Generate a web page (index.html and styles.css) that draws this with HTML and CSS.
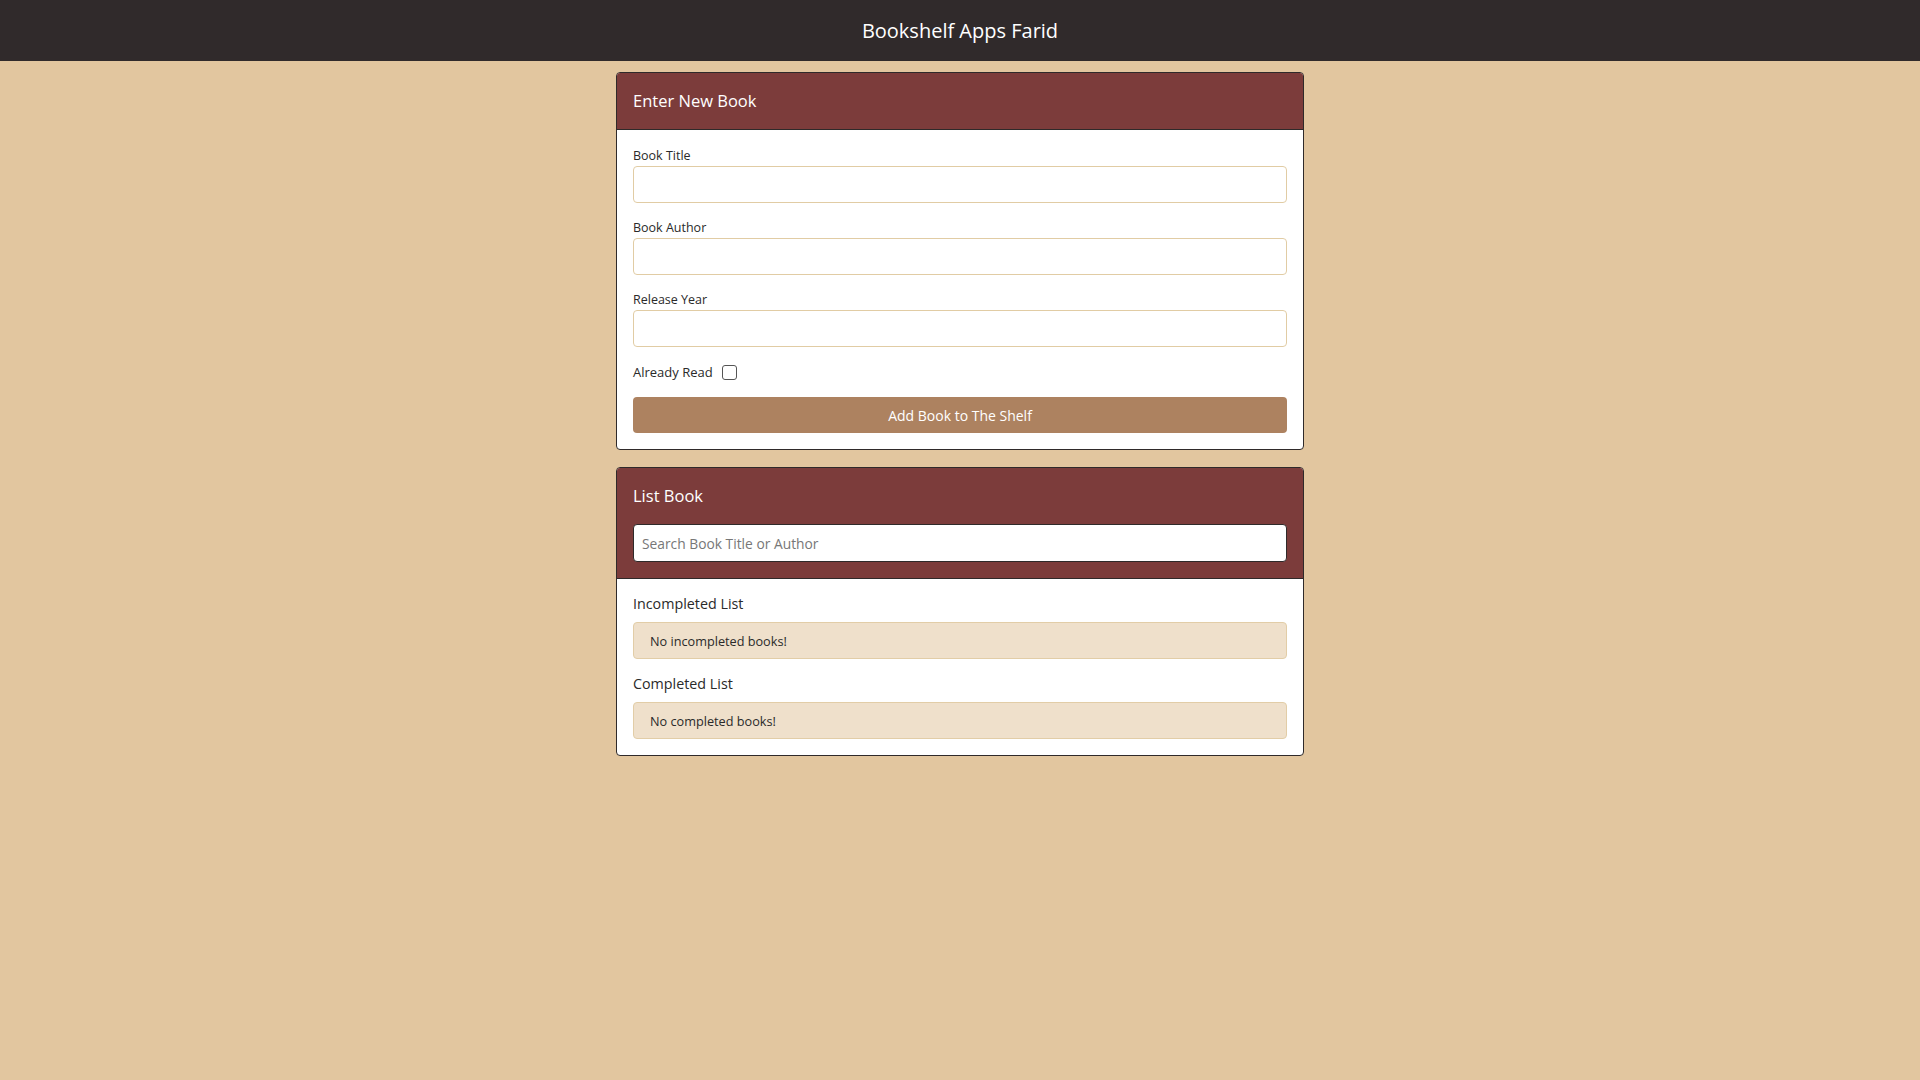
FILE: index.html
```html
<!DOCTYPE html>
<html lang="en">
<head>
<meta charset="utf-8">
<title>Bookshelf Apps Farid</title>
<link rel="stylesheet" href="styles.css">
</head>
<body>
<header class="topbar">
  <h1 class="topbar-title">Bookshelf Apps Farid</h1>
</header>
<main class="container">
  <section class="card">
    <div class="card-head">
      <h2 class="card-title">Enter New Book</h2>
    </div>
    <form class="card-body form-body">
      <div class="field">
        <label class="label" for="title">Book Title</label>
        <input class="input" id="title" type="text">
      </div>
      <div class="field">
        <label class="label" for="author">Book Author</label>
        <input class="input" id="author" type="text">
      </div>
      <div class="field">
        <label class="label" for="year">Release Year</label>
        <input class="input" id="year" type="number">
      </div>
      <div class="check-row">
        <label class="label label-check" for="read">Already Read</label>
        <input class="checkbox" id="read" type="checkbox">
      </div>
      <button class="btn" type="button">Add Book to The Shelf</button>
    </form>
  </section>
  <section class="card">
    <div class="card-head">
      <h2 class="card-title">List Book</h2>
      <input class="search" type="text" placeholder="Search Book Title or Author">
    </div>
    <div class="card-body list-body">
      <h3 class="list-title">Incompleted List</h3>
      <div class="empty">No incompleted books!</div>
      <h3 class="list-title list-title-next">Completed List</h3>
      <div class="empty">No completed books!</div>
    </div>
  </section>
</main>
</body>
</html>
```
FILE: styles.css
```css
* { box-sizing: border-box; }
body {
  margin: 0;
  background: #e2c69f;
  font-family: "Open Sans", "Noto Sans", sans-serif;
  color: #2a2a2a;
}
.topbar {
  height: 61px;
  background: #302a2b;
  display: flex;
  align-items: center;
  justify-content: center;
}
.topbar-title {
  margin: 0;
  color: #ffffff;
  font-size: 20px;
  font-weight: 500;
  line-height: 1;
}
.container {
  width: 688px;
  margin: 11px auto 0;
  display: flex;
  flex-direction: column;
  gap: 17px;
}
.card {
  background: #ffffff;
  border: 1px solid #2f2a2a;
  border-radius: 4px;
  overflow: hidden;
}
.card-head {
  background: #7c3c3b;
  border-bottom: 1px solid #2f2a2a;
  padding: 16px 16px;
  display: flex;
  flex-direction: column;
  gap: 16px;
}
.card-title {
  margin: 0;
  color: #ffffff;
  font-size: 16.5px;
  font-weight: 500;
  line-height: 24px;
}
.card-body {
  display: flex;
  flex-direction: column;
}
.form-body { padding: 16px 16px 16px; }
.list-body { padding: 15px 16px 16px; }
.field {
  display: flex;
  flex-direction: column;
  gap: 1px;
  margin-bottom: 16px;
}
.field:first-child .label { line-height: 19px; }
.field + .field .label { line-height: 18px; }
.label {
  font-size: 12.5px;
  font-weight: 500;
  line-height: 18px;
  color: #2a2a2a;
}
.label-check { font-size: 13px; }
.input {
  height: 37px;
  border: 1px solid #e1cca4;
  border-radius: 4px;
  background: #ffffff;
  font: inherit;
  padding: 0 8px;
}
.check-row {
  display: flex;
  align-items: center;
  gap: 9px;
  margin-bottom: 16px;
}
.checkbox {
  width: 15px;
  height: 15px;
  margin: 0;
  appearance: none;
  border: 1px solid #555;
  border-radius: 3px;
  background: #fff;
}
.btn {
  height: 36px;
  border: none;
  border-radius: 4px;
  background: #ad8260;
  color: #ffffff;
  font-family: inherit;
  font-size: 14px;
}
.search {
  height: 38px;
  border: 1px solid #2f2a2a;
  border-radius: 4px;
  background: #ffffff;
  padding: 0 8px;
  font-family: inherit;
  font-size: 13.8px;
  color: #333;
}
.search::placeholder { color: #777; }
.list-title {
  margin: 0 0 8px;
  font-size: 14.3px;
  font-weight: 500;
  line-height: 20px;
  color: #2a2a2a;
}
.list-title-next { margin-top: 15px; }
.empty {
  height: 37px;
  display: flex;
  align-items: center;
  padding: 0 16px;
  background: #efe0cb;
  border: 1px solid #e2cda7;
  border-radius: 4px;
  font-size: 12.7px;
  color: #2a2a2a;
}
```
